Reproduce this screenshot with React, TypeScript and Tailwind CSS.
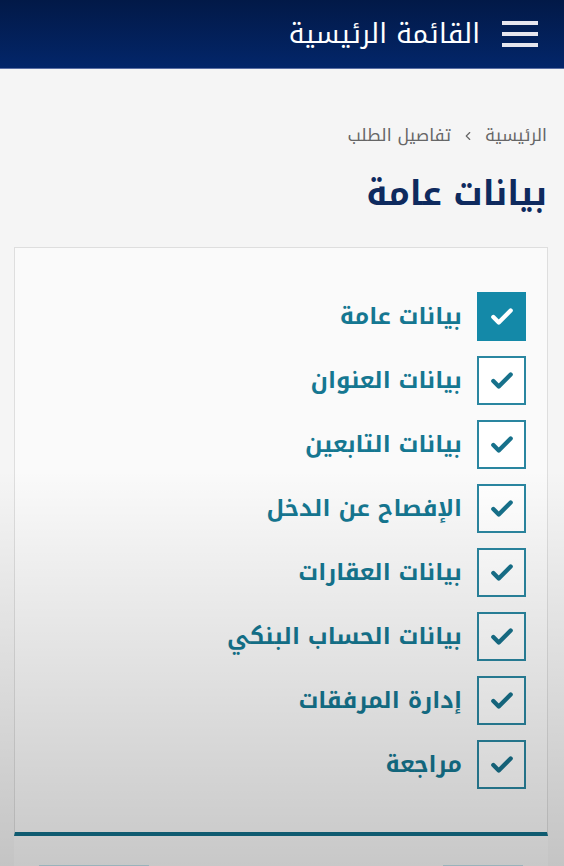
import React from 'react';
import { Check, ChevronLeft } from 'lucide-react';

const steps = [
  'بيانات عامة',
  'بيانات العنوان',
  'بيانات التابعين',
  'الإفصاح عن الدخل',
  'بيانات العقارات',
  'بيانات الحساب البنكي',
  'إدارة المرفقات',
  'مراجعة',
];

const StepRow: React.FC<{ label: string; active?: boolean }> = ({ label, active }) => (
  <div className="flex items-center gap-[15px] h-[49px]">
    <div
      className={`w-[49px] h-[49px] flex items-center justify-center border-2 shrink-0 ${
        active ? 'bg-[#1489a8] border-[#1489a8] text-white' : 'bg-white border-[#2a86a0] text-[#17718b]'
      }`}
    >
      <Check className="w-[26px] h-[26px]" strokeWidth={4} />
    </div>
    <span className="text-[23px] font-bold text-[#157791] leading-none">{label}</span>
  </div>
);

export default function App() {
  return (
    <div
      dir="rtl"
      className="relative w-[564px] h-[866px] overflow-hidden bg-[#f5f5f5]"
      style={{ fontFamily: '"Noto Kufi Arabic", "Noto Sans Arabic", "DejaVu Sans", sans-serif' }}
    >
      <header className="h-[69px] bg-gradient-to-b from-[#021947] to-[#03266a] border-b border-[#5b6fa3] flex items-center gap-[22px] pr-[26px]">
        <div className="flex flex-col gap-[7px] w-[36px]">
          <span className="h-[4px] bg-[#e6e6ee] block" />
          <span className="h-[4px] bg-[#e6e6ee] block" />
          <span className="h-[4px] bg-[#e6e6ee] block" />
        </div>
        <h1 className="text-white text-[27px] leading-none">القائمة الرئيسية</h1>
      </header>

      <div className="px-[17px] pt-[58px]">
        <nav className="flex items-center gap-[10px] text-[17px] text-[#666] leading-none">
          <span>الرئيسية</span>
          <ChevronLeft className="w-[14px] h-[14px]" strokeWidth={2} />
          <span>تفاصيل الطلب</span>
        </nav>
        <h2 className="mt-[33px] text-[34px] font-bold text-[#0e2a5e] leading-none">بيانات عامة</h2>
      </div>

      <div className="mr-[16px] ml-[14px] mt-[36px] bg-[#fafafa] border border-[#dedede] border-b-[4px] border-b-[#126f89] pt-[44px] pb-[43px] pr-[21px] flex flex-col gap-[15px]">
        {steps.map((s, i) => (
          <StepRow key={s} label={s} active={i === 0} />
        ))}
      </div>

      <div className="mr-[16px] ml-[14px] bg-[#fafafa] h-[60px] px-[25px] pt-[29px] flex justify-between">
        <div className="w-[80px] h-[40px] bg-[#bfe0ea]" />
        <div className="w-[110px] h-[40px] bg-[#bfe0ea]" />
      </div>

      <div className="pointer-events-none absolute left-0 right-0 top-[470px] bottom-0 bg-gradient-to-b from-transparent to-black/20" />
    </div>
  );
}
